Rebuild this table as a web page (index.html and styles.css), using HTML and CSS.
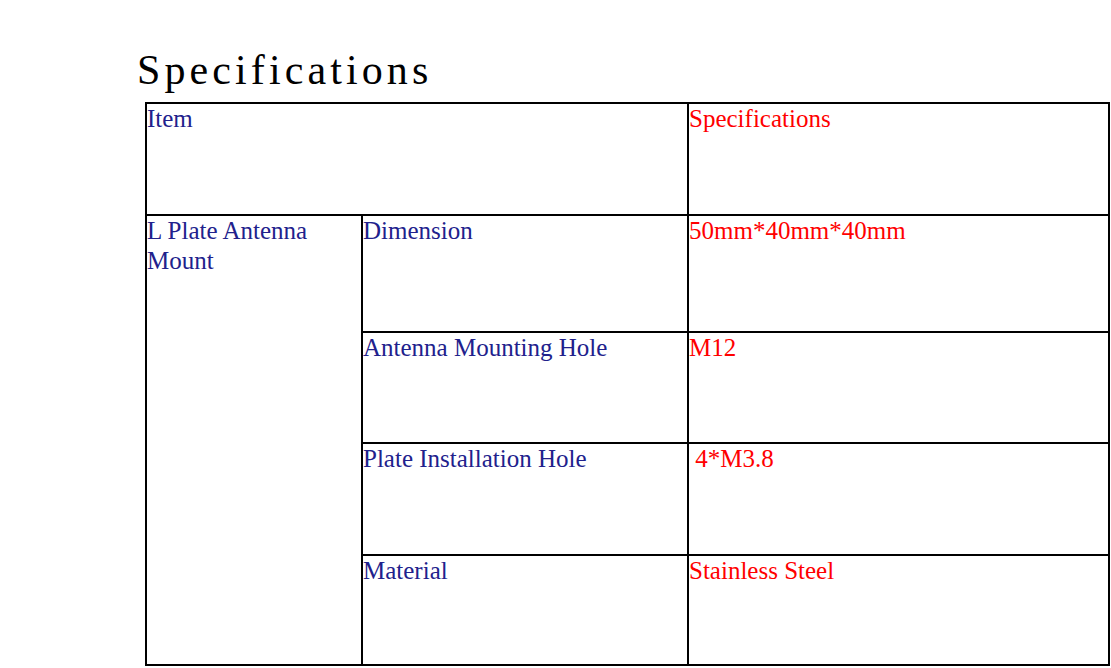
FILE: index.html
```html
<!DOCTYPE html>
<html>
<head>
<meta charset="utf-8">
<link rel="stylesheet" href="styles.css">
</head>
<body>
<div class="page">
  <h1 class="title">Specifications</h1>
  <table class="spec">
    <colgroup>
      <col class="c1">
      <col class="c2">
      <col class="c3">
    </colgroup>
    <tr class="r1">
      <td class="lbl" colspan="2">Item</td>
      <td class="val">Specifications</td>
    </tr>
    <tr class="r2">
      <td class="lbl" rowspan="4">L Plate Antenna Mount</td>
      <td class="lbl">Dimension</td>
      <td class="val">50mm*40mm*40mm</td>
    </tr>
    <tr class="r3">
      <td class="lbl">Antenna Mounting Hole</td>
      <td class="val">M12</td>
    </tr>
    <tr class="r4">
      <td class="lbl">Plate Installation Hole</td>
      <td class="val">&nbsp;4*M3.8</td>
    </tr>
    <tr class="r5">
      <td class="lbl">Material</td>
      <td class="val">Stainless Steel</td>
    </tr>
  </table>
</div>
</body>
</html>
```

FILE: styles.css
```css
html, body {
  margin: 0;
  padding: 0;
  background: #ffffff;
}

.page {
  padding: 46px 0 0 145px;
}

.title {
  margin: 0 0 8px -8px;
  font-family: "Liberation Serif", "Times New Roman", serif;
  font-weight: normal;
  font-size: 42px;
  letter-spacing: 4.1px;
  line-height: 48px;
  color: #000000;
}

.spec {
  border-collapse: separate;
  border-spacing: 0;
  border-top: 2px solid #000;
  border-left: 2px solid #000;
  table-layout: fixed;
  width: 965px;
  font-family: "Liberation Serif", "Times New Roman", serif;
  font-size: 25px;
  line-height: 29.5px;
}

.spec td {
  box-sizing: border-box;
  padding: 0;
  vertical-align: top;
  border-right: 2px solid #000;
  border-bottom: 2px solid #000;
  text-align: left;
}

.c1 { width: 216px; }
.c2 { width: 326px; }
.c3 { width: 421px; }

.r1 td { height: 112px; }
.r2 td { height: 117px; }
.r3 td { height: 111px; }
.r4 td { height: 112px; }
.r5 td { height: 110px; }

.lbl { color: #21218c; }
.val { color: #ff0000; }
```
